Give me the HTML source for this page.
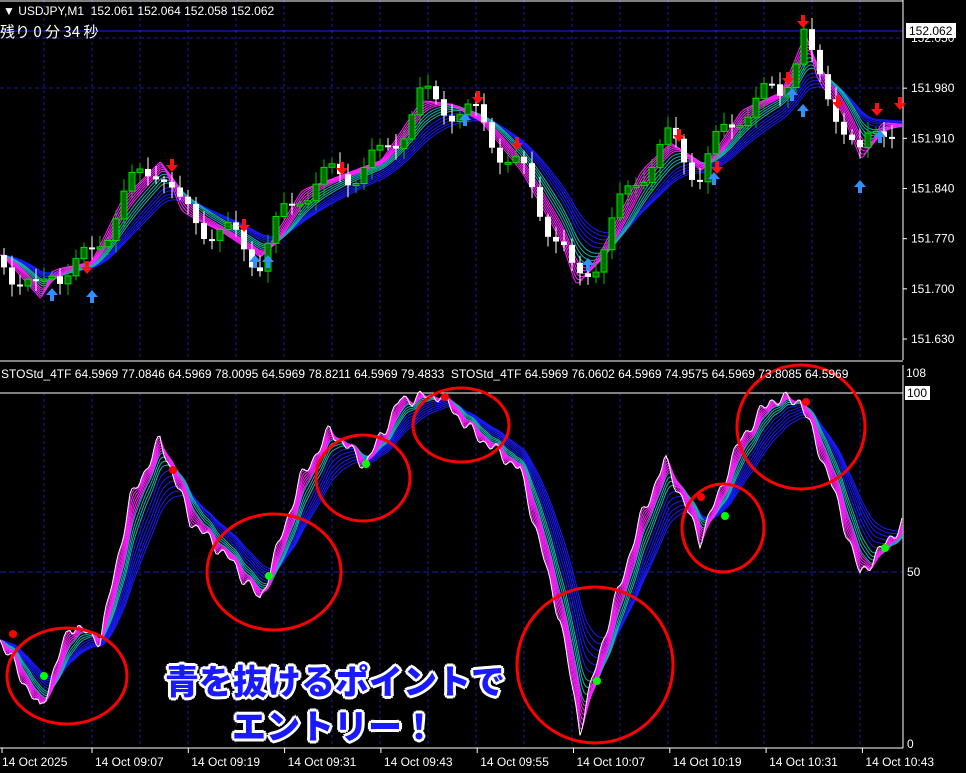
<!DOCTYPE html><html><head><meta charset="utf-8"><style>
body{margin:0;background:#000;width:966px;height:773px;overflow:hidden;font-family:"Liberation Sans","Noto Sans CJK JP",sans-serif}
svg{position:absolute;left:0;top:0}
.t{position:absolute;color:#fff;font-size:12px;white-space:nowrap}
.jp{position:absolute;font-family:"Noto Sans CJK JP",sans-serif;font-weight:900;font-size:34px;color:#1a1aff;text-shadow:0 0 2px #fff,2px 2px 0 #fff,-2px -2px 0 #fff,2px -2px 0 #fff,-2px 2px 0 #fff,3px 0 0 #fff,-3px 0 0 #fff,0 3px 0 #fff,0 -3px 0 #fff;white-space:nowrap}
</style></head><body>
<svg id="s" width="966" height="773" xmlns="http://www.w3.org/2000/svg"></svg>
<div class="t" style="left:3px;top:4px">▼ USDJPY,M1&nbsp; 152.061 152.064 152.058 152.062</div>
<div class="t" style="left:0;top:21px;font-size:15px;font-family:'Noto Sans CJK JP',sans-serif">残り 0 分 34 秒</div>
<div class="t" style="left:1px;top:367px">STOStd_4TF 64.5969 77.0846 64.5969 78.0095 64.5969 78.8211 64.5969 79.4833&nbsp; STOStd_4TF 64.5969 76.0602 64.5969 74.9575 64.5969 73.8085 64.5969</div>
<div class="jp" style="left:165px;top:655px">青を抜けるポイントで</div>
<div class="jp" style="left:232px;top:700px">エントリー！</div>
<script>
var s=document.getElementById('s'),h='';
function L(x1,y1,x2,y2,c,w,d){h+='<line x1="'+x1+'" y1="'+y1+'" x2="'+x2+'" y2="'+y2+'" stroke="'+c+'" stroke-width="'+(w||1)+'"'+(d?' stroke-dasharray="'+d+'"':'')+'/>';}
function T(x,y,t,c,a){h+='<text x="'+x+'" y="'+y+'" fill="'+(c||'#fff')+'" font-size="12" font-family="Liberation Sans,sans-serif"'+(a?' text-anchor="'+a+'"':'')+'>'+t+'</text>';}
for(var x=44;x<903;x+=48){L(x,0,x,360,'#1a1aa0',1,'3,3');L(x,393,x,748,'#1a1aa0',1,'3,3');}
[38,88].forEach(function(y){L(0,y,903,y,'#1a1aa0',1,'4,3')});
L(0,572,903,572,'#1a1aa0',1,'6,3');
L(0,31,903,31,'#2020ff',1);
L(903,0,903,360,'#fff');L(0,361,903,361,'#fff');L(0,393,903,393,'#fff');L(903,365,903,748,'#fff');L(0,748,903,748,'#fff');L(0,1,903,1,'#fff');
function py(p){return 38+(152.05-p)/0.07*50.17;}
[151.98,151.91,151.84,151.77,151.70,151.63].forEach(function(p){var y=py(p);L(903,y,907,y,'#fff');T(911,y+4,p.toFixed(3));});
T(911,42,'152.050');
h+='<rect x="906" y="23" width="50" height="15" fill="#fff"/>';T(909,35,'152.062','#000');
T(906,377,'108');h+='<rect x="905" y="386" width="25" height="14" fill="#fff"/>';T(907,397,'100','#000');
T(907,576,'50');T(907,748,'0');
var tl=['14 Oct 2025','14 Oct 09:07','14 Oct 09:19','14 Oct 09:31','14 Oct 09:43','14 Oct 09:55','14 Oct 10:07','14 Oct 10:19','14 Oct 10:31','14 Oct 10:43'];
tl.forEach(function(t,i){var x=i==0?2:92+(i-1)*96.3;L(x,748,x,753,'#fff');T(x+(i==0?0:3),766,t);});
function interp(k,x){for(var i=0;i<k.length-1;i++){if(x<=k[i+1][0]){var a=k[i],b=k[i+1],t=(x-a[0])/(b[0]-a[0]);return a[1]+(b[1]-a[1])*t;}}return k[k.length-1][1];}
var pk=[[0,255],[40,300],[50,270],[90,262],[120,200],[160,160],[180,212],[220,232],[260,258],[300,190],[340,175],[380,160],[420,100],[450,105],[480,122],[520,172],[560,242],[575,288],[600,250],[640,170],[670,142],[700,172],[740,110],[780,92],[805,30],[815,80],[840,112],[860,162],[880,122],[903,125]];
var ik=[[0,640],[40,710],[70,625],[100,640],[130,500],[160,440],[190,520],[230,560],[260,600],[300,480],[330,430],[365,465],[400,400],[440,395],[470,430],[520,470],[560,620],[580,730],[600,650],[640,520],[665,460],[700,540],[740,440],[770,400],[800,400],[830,480],[860,575],[903,522]];
function ser(k,j){var a=[];for(var x=0;x<=903;x+=2)a.push(interp(k,x)+(j?Math.sin(x*0.37)*j*Math.sin(x*0.11):0));return a;}
function ema(a,n){var r=[],v=a[0],al=2/(n+1);for(var i=0;i<a.length;i++){v+=al*(a[i]-v);r.push(v);}return r;}
function path(a,c,w){var d='';for(var i=0;i<a.length;i++)d+=(i?'L':'M')+(i*2)+','+a[i].toFixed(1);h+='<path d="'+d+'" fill="none" stroke="'+c+'" stroke-width="'+(w||1)+'"/>';}
var P=ser(pk),I=ser(ik,8);
for(var n=30;n<=48;n+=4)path(ema(P,n),'#1a1aff',1);
for(var n=16;n<=26;n+=3)path(ema(P,n),'#16b0b0',1);
for(var n=3;n<=13;n+=2)path(ema(P,n),'#ff20ff',1);
var prev=P[0];
for(var x=4;x<900;x+=8){var c=interp(pk,x)+(Math.sin(x*1.7)*16),o=prev;prev=c;var hi=Math.min(o,c)-3-Math.abs(Math.sin(x*0.9))*9,lo=Math.max(o,c)+3+Math.abs(Math.cos(x*1.3))*9;
var g=c<o;L(x,hi,x,lo,g?'#00c000':'#fff');var tp=Math.min(o,c),bh=Math.max(2,Math.abs(o-c));
h+='<rect x="'+(x-3)+'" y="'+tp.toFixed(1)+'" width="6" height="'+bh.toFixed(1)+'" '+(g?'fill="#007000" stroke="#00e000"':'fill="#fff"')+'/>';}
function down(x,y){h+='<path d="M'+x+','+(y+12)+'l-6,-7h4v-6h4v6h4z" fill="#ff1010"/>';}
function up(x,y){h+='<path d="M'+x+','+y+'l-6,7h4v6h4v-6h4z" fill="#3090ff"/>';}
[[87,262],[172,160],[244,220],[342,163],[478,92],[517,138],[679,130],[717,162],[788,73],[803,16],[838,97],[877,104],[900,98]].forEach(function(a){down(a[0],a[1])});
[[52,288],[92,290],[255,255],[268,255],[465,113],[588,258],[714,172],[792,88],[803,104],[860,180],[880,130]].forEach(function(a){up(a[0],a[1])});
for(var n=18;n<=34;n+=3)path(ema(I,n),'#1a1aff',1);
for(var n=9;n<=15;n+=2)path(ema(I,n),'#16b0b0',1);
for(var n=2;n<=8;n+=1.2)path(ema(I,n),'#ff20ff',1);
path(I,'#fff',1);
[[67,676,60,48],[274,572,67,58],[363,478,47,43],[461,425,48,37],[595,665,78,78],[723,528,41,44],[801,427,64,62]].forEach(function(c){h+='<ellipse cx="'+c[0]+'" cy="'+c[1]+'" rx="'+c[2]+'" ry="'+c[3]+'" fill="none" stroke="#ff0000" stroke-width="3"/>';});
[[44,676],[269,576],[366,464],[725,516],[597,681],[885,548]].forEach(function(p){h+='<circle cx="'+p[0]+'" cy="'+p[1]+'" r="4" fill="#00ff00"/>';});
[[13,634],[173,470],[445,397],[701,497],[806,402]].forEach(function(p){h+='<circle cx="'+p[0]+'" cy="'+p[1]+'" r="4" fill="#ff0000"/>';});
s.innerHTML=h;
</script>
</body></html>
